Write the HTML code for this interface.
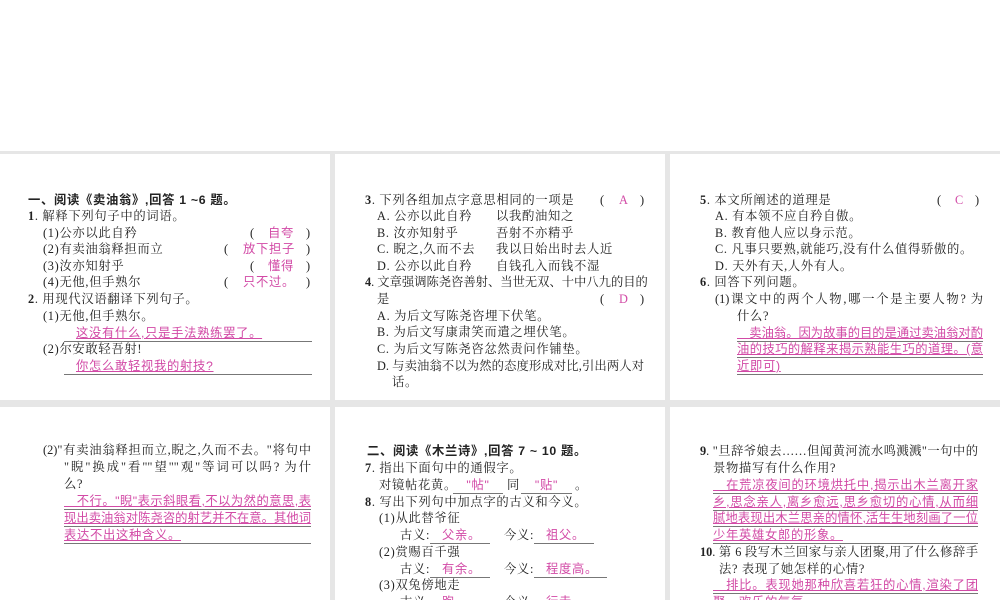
<!DOCTYPE html>
<html style="overflow:hidden"><head><meta charset="utf-8"><style>
*{margin:0;padding:0}
html,body{width:1000px;height:600px;overflow:hidden}
body{position:relative;background:#e6e6e6;font-family:"Liberation Serif","Noto Serif CJK SC","Noto Sans CJK SC",serif;color:#222}
.top{position:absolute;left:0;top:0;width:1000px;height:151px;background:#fff}
.p{position:absolute;background:#fff;overflow:hidden}
.l{position:absolute;white-space:nowrap;font-size:12.3px;line-height:17px;letter-spacing:0.7px}
.j{text-align:justify;text-align-last:justify;letter-spacing:0}
.k{color:#d24aa6;font-family:"Liberation Sans","Noto Sans CJK SC",sans-serif}
.u{border-bottom:1px solid #777;line-height:16px}
.b{font-weight:bold;font-family:"Liberation Sans","Noto Sans CJK SC",sans-serif;font-weight:600}
</style></head><body>
<div class="top"></div>
<div class="p" style="left:0;top:154px;width:330px;height:246px"></div>
<div class="p" style="left:335px;top:154px;width:330px;height:246px"></div>
<div class="p" style="left:670px;top:154px;width:330px;height:246px"></div>
<div class="p" style="left:0;top:407px;width:330px;height:193px"></div>
<div class="p" style="left:335px;top:407px;width:330px;height:193px"></div>
<div class="p" style="left:670px;top:407px;width:330px;height:193px"></div>

<!-- panel 1 -->
<div class="l b" style="left:28px;top:192px">一、阅读《卖油翁》,回答 1 ~6 题。</div>
<div class="l" style="left:28px;top:208px"><b>1</b>. 解释下列句子中的词语。</div>
<div class="l" style="left:43px;top:225px">(1)公亦以此自矜</div>
<div class="l" style="left:250px;top:225px">(</div><div class="l k" style="left:268px;top:225px">自夸</div><div class="l" style="left:306px;top:225px">)</div>
<div class="l" style="left:43px;top:241px">(2)有卖油翁释担而立</div>
<div class="l" style="left:224px;top:241px">(</div><div class="l k" style="left:243px;top:241px">放下担子</div><div class="l" style="left:306px;top:241px">)</div>
<div class="l" style="left:43px;top:258px">(3)汝亦知射乎</div>
<div class="l" style="left:250px;top:258px">(</div><div class="l k" style="left:268px;top:258px">懂得</div><div class="l" style="left:306px;top:258px">)</div>
<div class="l" style="left:43px;top:274px">(4)无他,但手熟尔</div>
<div class="l" style="left:224px;top:274px">(</div><div class="l k" style="left:243px;top:274px">只不过。</div><div class="l" style="left:306px;top:274px">)</div>
<div class="l" style="left:28px;top:291px"><b>2</b>. 用现代汉语翻译下列句子。</div>
<div class="l" style="left:43px;top:308px">(1)无他,但手熟尔。</div>
<div class="l u" style="left:64px;top:325px;width:248px"><span class="k" style="margin-left:12px;text-decoration:underline">这没有什么,只是手法熟练罢了。</span></div>
<div class="l" style="left:43px;top:341px">(2)尔安敢轻吾射!</div>
<div class="l u" style="left:64px;top:358px;width:248px"><span class="k" style="margin-left:12px;text-decoration:underline">你怎么敢轻视我的射技?</span></div>

<!-- panel 2 -->
<div class="l" style="left:365px;top:192px"><b>3</b>. 下列各组加点字意思相同的一项是</div>
<div class="l" style="left:600px;top:192px">(</div><div class="l" style="left:619px;top:192px;color:#d24aa6">A</div><div class="l" style="left:640px;top:192px">)</div>
<div class="l" style="left:377px;top:208px">A. 公亦以此自矜</div><div class="l" style="left:496px;top:208px">以我酌油知之</div>
<div class="l" style="left:377px;top:225px">B. 汝亦知射乎</div><div class="l" style="left:496px;top:225px">吾射不亦精乎</div>
<div class="l" style="left:377px;top:241px">C. 睨之,久而不去</div><div class="l" style="left:496px;top:241px">我以日始出时去人近</div>
<div class="l" style="left:377px;top:258px">D. 公亦以此自矜</div><div class="l" style="left:496px;top:258px">自钱孔入而钱不湿</div>
<div class="l j" style="left:365px;top:274px;width:280px"><b>4</b>. 文章强调陈尧咨善射、当世无双、十中八九的目的</div>
<div class="l" style="left:377px;top:291px">是</div>
<div class="l" style="left:600px;top:291px">(</div><div class="l" style="left:619px;top:291px;color:#d24aa6">D</div><div class="l" style="left:640px;top:291px">)</div>
<div class="l" style="left:377px;top:308px">A. 为后文写陈尧咨埋下伏笔。</div>
<div class="l" style="left:377px;top:324px">B. 为后文写康肃笑而遣之埋伏笔。</div>
<div class="l" style="left:377px;top:341px">C. 为后文写陈尧咨忿然责问作铺垫。</div>
<div class="l j" style="left:377px;top:358px;width:267px">D. 与卖油翁不以为然的态度形成对比,引出两人对</div>
<div class="l" style="left:392px;top:374px">话。</div>

<!-- panel 3 -->
<div class="l" style="left:700px;top:192px"><b>5</b>. 本文所阐述的道理是</div>
<div class="l" style="left:937px;top:192px">(</div><div class="l" style="left:955px;top:192px;color:#d24aa6">C</div><div class="l" style="left:975px;top:192px">)</div>
<div class="l" style="left:715px;top:208px">A. 有本领不应自矜自傲。</div>
<div class="l" style="left:715px;top:225px">B. 教育他人应以身示范。</div>
<div class="l" style="left:715px;top:241px">C. 凡事只要熟,就能巧,没有什么值得骄傲的。</div>
<div class="l" style="left:715px;top:258px">D. 天外有天,人外有人。</div>
<div class="l" style="left:700px;top:274px"><b>6</b>. 回答下列问题。</div>
<div class="l j" style="left:715px;top:291px;width:268px">(1)课文中的两个人物,哪一个是主要人物? 为</div>
<div class="l" style="left:737px;top:308px">什么?</div>
<div class="l u k j" style="left:737px;top:325px;width:246px;text-decoration:underline">&#12288;卖油翁。因为故事的目的是通过卖油翁对酌</div>
<div class="l u k j" style="left:737px;top:341px;width:246px;text-decoration:underline">油的技巧的解释来揭示熟能生巧的道理。(意</div>
<div class="l u" style="left:737px;top:358px;width:246px"><span class="k" style="text-decoration:underline">近即可)</span></div>

<!-- row 2 panel 1 -->
<div class="l j" style="left:43px;top:442px;width:268px">(2)"有卖油翁释担而立,睨之,久而不去。"将句中</div>
<div class="l j" style="left:64px;top:459px;width:247px">"睨"换成"看""望""观"等词可以吗? 为什</div>
<div class="l" style="left:64px;top:476px">么?</div>
<div class="l u k j" style="left:64px;top:493px;width:247px;text-decoration:underline">&#12288;不行。"睨"表示斜眼看,不以为然的意思,表</div>
<div class="l u k j" style="left:64px;top:510px;width:247px;text-decoration:underline">现出卖油翁对陈尧咨的射艺并不在意。其他词</div>
<div class="l u" style="left:64px;top:527px;width:247px"><span class="k" style="text-decoration:underline">表达不出这种含义。</span></div>

<!-- row 2 panel 2 -->
<div class="l b" style="left:367px;top:443px">二、阅读《木兰诗》,回答 7 ~ 10 题。</div>
<div class="l" style="left:365px;top:460px"><b>7</b>. 指出下面句中的通假字。</div>
<div class="l" style="left:379px;top:477px">对镜帖花黄。</div>
<div class="l u" style="left:453px;top:477px;width:50px;text-align:center"><span class="k">"帖"</span></div>
<div class="l" style="left:507px;top:477px">同</div>
<div class="l u" style="left:521px;top:477px;width:51px;text-align:center"><span class="k">"贴"</span></div>
<div class="l" style="left:575px;top:477px">。</div>
<div class="l" style="left:365px;top:494px"><b>8</b>. 写出下列句中加点字的古义和今义。</div>
<div class="l" style="left:379px;top:510px">(1)从此替爷征</div>
<div class="l" style="left:400px;top:527px">古义:</div>
<div class="l u" style="left:430px;top:527px;width:60px"><span class="k" style="margin-left:12px">父亲。</span></div>
<div class="l" style="left:504px;top:527px">今义:</div>
<div class="l u" style="left:534px;top:527px;width:60px"><span class="k" style="margin-left:12px">祖父。</span></div>
<div class="l" style="left:379px;top:544px">(2)赏赐百千强</div>
<div class="l" style="left:400px;top:561px">古义:</div>
<div class="l u" style="left:430px;top:561px;width:60px"><span class="k" style="margin-left:12px">有余。</span></div>
<div class="l" style="left:504px;top:561px">今义:</div>
<div class="l u" style="left:534px;top:561px;width:73px"><span class="k" style="margin-left:12px">程度高。</span></div>
<div class="l" style="left:379px;top:577px">(3)双兔傍地走</div>
<div class="l" style="left:400px;top:594px">古义:</div>
<div class="l u" style="left:430px;top:594px;width:60px"><span class="k" style="margin-left:12px">跑。</span></div>
<div class="l" style="left:504px;top:594px">今义:</div>
<div class="l u" style="left:534px;top:594px;width:60px"><span class="k" style="margin-left:12px">行走。</span></div>

<!-- row 2 panel 3 -->
<div class="l j" style="left:700px;top:443px;width:278px"><b>9</b>. "旦辞爷娘去……但闻黄河流水鸣溅溅"一句中的</div>
<div class="l" style="left:713px;top:460px">景物描写有什么作用?</div>
<div class="l u k j" style="left:713px;top:477px;width:265px;text-decoration:underline">&#12288;在荒凉夜间的环境烘托中,揭示出木兰离开家</div>
<div class="l u k j" style="left:713px;top:494px;width:265px;text-decoration:underline">乡,思念亲人,离乡愈远,思乡愈切的心情,从而细</div>
<div class="l u k j" style="left:713px;top:510px;width:265px;text-decoration:underline">腻地表现出木兰思亲的情怀,活生生地刻画了一位</div>
<div class="l u" style="left:713px;top:527px;width:265px"><span class="k" style="text-decoration:underline">少年英雄女郎的形象。</span></div>
<div class="l j" style="left:700px;top:544px;width:278px"><b>10</b>. 第 6 段写木兰回家与亲人团聚,用了什么修辞手</div>
<div class="l" style="left:719px;top:561px">法? 表现了她怎样的心情?</div>
<div class="l u k j" style="left:713px;top:577px;width:265px;text-decoration:underline">&#12288;排比。表现她那种欣喜若狂的心情,渲染了团</div>
<div class="l u" style="left:713px;top:594px;width:265px"><span class="k" style="text-decoration:underline">聚、欢乐的气氛。</span></div>
</body></html>
